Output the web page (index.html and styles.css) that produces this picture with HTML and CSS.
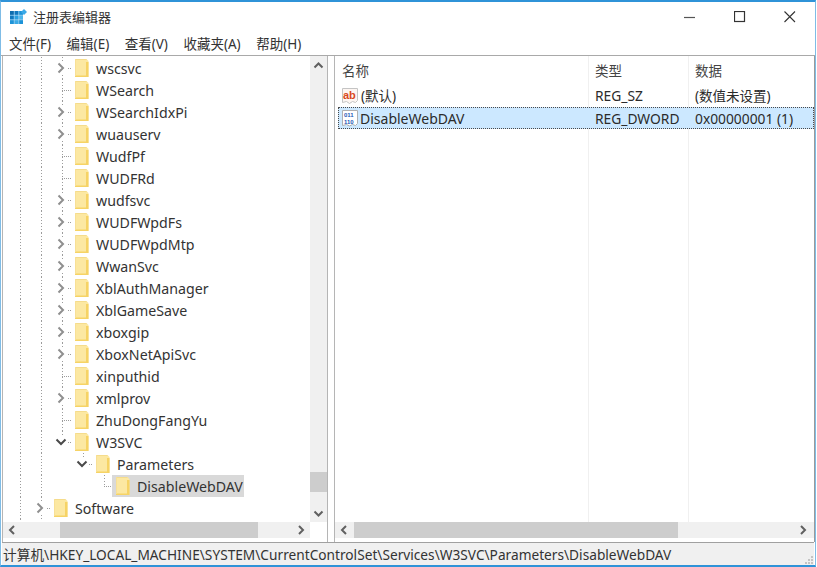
FILE: index.html
```html
<!DOCTYPE html>
<html lang="zh-CN">
<head>
<meta charset="utf-8">
<title>注册表编辑器</title>
<link rel="stylesheet" href="styles.css">
</head>
<body>
<svg class="defs" width="0" height="0" aria-hidden="true">
  <defs>
    <symbol id="folder" viewBox="0 0 16 22">
      <path d="M1 2h11.500l2 2v16H1z" fill="#fce8a2"/>
      <path d="M12 5h2.500v15H1v-1.500h11z" fill="#f6d365"/>
      <path d="M1 2.500h11.500" stroke="#f5dc8c" stroke-width="1" fill="none"/>
      <path d="M1.500 2v17" stroke="#f8e096" stroke-width="1" fill="none"/>
    </symbol>
    <symbol id="chev-r" viewBox="0 0 21 22">
      <path d="M7.500 6.500l4.500 4.500-4.500 4.500" fill="none" stroke="#8f8f8f" stroke-width="2"/>
    </symbol>
    <symbol id="chev-d" viewBox="0 0 21 22">
      <path d="M5.500 8.500l4.500 4.500 4.500-4.500" fill="none" stroke="#4a4a4a" stroke-width="2"/>
    </symbol>
  </defs>
</svg>
<div class="window">
  <header class="titlebar">
    <svg class="appicon" width="17" height="17" viewBox="0 0 17 17">
      <rect x="0" y="2" width="13" height="13" fill="#1d93d8"/>
      <rect x="0" y="2" width="4" height="4" fill="#0e6cae"/>
      <rect x="4.500" y="2" width="4" height="4" fill="#1178bf"/>
      <rect x="0" y="6.500" width="4" height="4" fill="#1178bf"/>
      <rect x="4.500" y="6.500" width="4" height="4" fill="#2aa0e0"/>
      <rect x="9" y="6.500" width="4" height="4" fill="#4cb6ec"/>
      <rect x="4.500" y="11" width="4" height="4" fill="#3aaae6"/>
      <path d="M0 6.250h13M0 10.750h13M4.250 2v13M8.750 2v13" stroke="#cfeafa" stroke-width=".6"/>
      <path d="M14 0l3 3-3 3-3-3z" fill="#3aa9e8"/>
    </svg>
    <span class="title">注册表编辑器</span>
    <div class="controls">
      <span class="ctl"><svg width="12" height="12" viewBox="0 0 12 12"><path d="M0 6.500h11" stroke="#555" stroke-width="1.200"/></svg></span>
      <span class="ctl"><svg width="12" height="12" viewBox="0 0 12 12"><rect x=".5" y=".5" width="10" height="10" fill="none" stroke="#333" stroke-width="1.200"/></svg></span>
      <span class="ctl"><svg width="12" height="12" viewBox="0 0 12 12"><path d="M.5.500l10.500 10.500M11 .5L.5 11" stroke="#333" stroke-width="1.100"/></svg></span>
    </div>
  </header>
  <nav class="menubar">
    <span class="menu">文件(F)</span>
    <span class="menu">编辑(E)</span>
    <span class="menu">查看(V)</span>
    <span class="menu">收藏夹(A)</span>
    <span class="menu">帮助(H)</span>
  </nav>
  <main class="panes">
    <section class="pane tree-pane">
      <div class="pane-top">
        <div class="tree">
          <div class="row"><i class="c g"></i><i class="c g"></i><i class="c tee"><svg class="chev"><use href="#chev-r"/></svg></i><svg class="folder"><use href="#folder"/></svg><span class="label">wscsvc</span></div>
          <div class="row"><i class="c g"></i><i class="c g"></i><i class="c tee"></i><svg class="folder"><use href="#folder"/></svg><span class="label">WSearch</span></div>
          <div class="row"><i class="c g"></i><i class="c g"></i><i class="c tee"><svg class="chev"><use href="#chev-r"/></svg></i><svg class="folder"><use href="#folder"/></svg><span class="label">WSearchIdxPi</span></div>
          <div class="row"><i class="c g"></i><i class="c g"></i><i class="c tee"><svg class="chev"><use href="#chev-r"/></svg></i><svg class="folder"><use href="#folder"/></svg><span class="label">wuauserv</span></div>
          <div class="row"><i class="c g"></i><i class="c g"></i><i class="c tee"></i><svg class="folder"><use href="#folder"/></svg><span class="label">WudfPf</span></div>
          <div class="row"><i class="c g"></i><i class="c g"></i><i class="c tee"></i><svg class="folder"><use href="#folder"/></svg><span class="label">WUDFRd</span></div>
          <div class="row"><i class="c g"></i><i class="c g"></i><i class="c tee"><svg class="chev"><use href="#chev-r"/></svg></i><svg class="folder"><use href="#folder"/></svg><span class="label">wudfsvc</span></div>
          <div class="row"><i class="c g"></i><i class="c g"></i><i class="c tee"><svg class="chev"><use href="#chev-r"/></svg></i><svg class="folder"><use href="#folder"/></svg><span class="label">WUDFWpdFs</span></div>
          <div class="row"><i class="c g"></i><i class="c g"></i><i class="c tee"><svg class="chev"><use href="#chev-r"/></svg></i><svg class="folder"><use href="#folder"/></svg><span class="label">WUDFWpdMtp</span></div>
          <div class="row"><i class="c g"></i><i class="c g"></i><i class="c tee"><svg class="chev"><use href="#chev-r"/></svg></i><svg class="folder"><use href="#folder"/></svg><span class="label">WwanSvc</span></div>
          <div class="row"><i class="c g"></i><i class="c g"></i><i class="c tee"><svg class="chev"><use href="#chev-r"/></svg></i><svg class="folder"><use href="#folder"/></svg><span class="label">XblAuthManager</span></div>
          <div class="row"><i class="c g"></i><i class="c g"></i><i class="c tee"><svg class="chev"><use href="#chev-r"/></svg></i><svg class="folder"><use href="#folder"/></svg><span class="label">XblGameSave</span></div>
          <div class="row"><i class="c g"></i><i class="c g"></i><i class="c tee"><svg class="chev"><use href="#chev-r"/></svg></i><svg class="folder"><use href="#folder"/></svg><span class="label">xboxgip</span></div>
          <div class="row"><i class="c g"></i><i class="c g"></i><i class="c tee"><svg class="chev"><use href="#chev-r"/></svg></i><svg class="folder"><use href="#folder"/></svg><span class="label">XboxNetApiSvc</span></div>
          <div class="row"><i class="c g"></i><i class="c g"></i><i class="c tee"></i><svg class="folder"><use href="#folder"/></svg><span class="label">xinputhid</span></div>
          <div class="row"><i class="c g"></i><i class="c g"></i><i class="c tee"><svg class="chev"><use href="#chev-r"/></svg></i><svg class="folder"><use href="#folder"/></svg><span class="label">xmlprov</span></div>
          <div class="row"><i class="c g"></i><i class="c g"></i><i class="c tee"></i><svg class="folder"><use href="#folder"/></svg><span class="label">ZhuDongFangYu</span></div>
          <div class="row"><i class="c g"></i><i class="c g"></i><i class="c end"><svg class="chev"><use href="#chev-d"/></svg></i><svg class="folder"><use href="#folder"/></svg><span class="label">W3SVC</span></div>
          <div class="row"><i class="c g"></i><i class="c g"></i><i class="c"></i><i class="c end"><svg class="chev"><use href="#chev-d"/></svg></i><svg class="folder"><use href="#folder"/></svg><span class="label">Parameters</span></div>
          <div class="row"><i class="c g"></i><i class="c g"></i><i class="c"></i><i class="c"></i><i class="c end"></i><span class="selected"><svg class="folder"><use href="#folder"/></svg><span class="label">DisableWebDAV</span></span></div>
          <div class="row"><i class="c g"></i><i class="c tee"><svg class="chev"><use href="#chev-r"/></svg></i><svg class="folder"><use href="#folder"/></svg><span class="label">Software</span></div>
          <div class="tail"><i class="c g"></i></div>
        </div>
        <div class="vscroll">
          <svg class="sb-arrow" width="17" height="17" viewBox="0 0 17 17"><path d="M4.500 11.500l4-4 4 4" fill="none" stroke="#606060" stroke-width="2"/></svg>
          <div class="vtrack"><div class="vthumb"></div></div>
          <svg class="sb-arrow" width="17" height="17" viewBox="0 0 17 17"><path d="M4.500 6.500l4 4 4-4" fill="none" stroke="#606060" stroke-width="2"/></svg>
        </div>
      </div>
      <div class="hscroll">
        <svg class="sb-arrow" width="17" height="16" viewBox="0 0 17 16"><path d="M11 4l-4 4 4 4" fill="none" stroke="#606060" stroke-width="2"/></svg>
        <div class="htrack"><div class="hthumb hthumb-tree"></div></div>
        <svg class="sb-arrow" width="17" height="16" viewBox="0 0 17 16"><path d="M6 4l4 4-4 4" fill="none" stroke="#606060" stroke-width="2"/></svg>
        <div class="corner"></div>
      </div>
    </section>
    <section class="pane list-pane">
      <div class="list">
        <div class="lhead">
          <span class="col col-name cjk">名称</span>
          <span class="col col-type cjk">类型</span>
          <span class="col col-data cjk">数据</span>
        </div>
        <div class="lrow">
          <span class="col col-name">
            <svg class="valicon" width="18" height="18" viewBox="0 0 18 18">
              <path d="M1.500 1.500h15v12l-2 2-3-1-3 2-3-2-4 1z" fill="#fdf6f2" stroke="#c4c4c4"/>
              <text x="2" y="11.500" class="abtext">ab</text>
            </svg><span class="cjk">(默认)</span></span>
          <span class="col col-type">REG_SZ</span>
          <span class="col col-data cjk">(数值未设置)</span>
        </div>
        <div class="lrow lrow-sel">
          <span class="col col-name">
            <svg class="valicon" width="18" height="18" viewBox="0 0 18 18">
              <path d="M1.500 1.500h15v13l-2 2-3-1-3 1.500-3-1.500-4 1z" fill="#fff" stroke="#b0b0b0"/>
              <text x="3" y="7.500" class="bintext">011</text>
              <text x="3" y="14.500" class="bintext">110</text>
            </svg><span class="name-text">DisableWebDAV</span></span>
          <span class="col col-type">REG_DWORD</span>
          <span class="col col-data">0x00000001 (1)</span>
        </div>
      </div>
      <div class="hscroll hscroll-list">
        <svg class="sb-arrow" width="17" height="16" viewBox="0 0 17 16"><path d="M11 4l-4 4 4 4" fill="none" stroke="#606060" stroke-width="2"/></svg>
        <div class="htrack"><div class="hthumb hthumb-list"></div></div>
        <svg class="sb-arrow" width="17" height="16" viewBox="0 0 17 16"><path d="M6 4l4 4-4 4" fill="none" stroke="#606060" stroke-width="2"/></svg>
      </div>
    </section>
  </main>
  <footer class="status">
    <span class="path">计算机\HKEY_LOCAL_MACHINE\SYSTEM\CurrentControlSet\Services\W3SVC\Parameters\DisableWebDAV</span>
    <svg class="grip" width="10" height="10" viewBox="0 0 10 10"><path d="M7 1h2v2H7zM4 4h2v2H4zM7 4h2v2H7zM1 7h2v2H1zM4 7h2v2H4zM7 7h2v2H7z" fill="#c4c4c4"/></svg>
  </footer>
</div>
</body>
</html>
```

FILE: styles.css
```css
* { box-sizing: border-box; }
html, body { margin: 0; padding: 0; }
body {
  width: 817px;
  height: 567px;
  overflow: hidden;
  background: #fff;
  font-family: "Noto Sans", "Noto Sans CJK SC", sans-serif;
  font-size: 13.800px;
  color: #2b2b2b;
}
.defs { display: block; height: 0; }
.window {
  width: 816px;
  height: 567px;
  display: flex;
  flex-direction: column;
  border-top: 2px solid #2f93d8;
  border-left: 1px solid #7fbce6;
  border-right: 1px solid #7fbce6;
  border-bottom: 2px solid #2f93d8;
  background: #fff;
}
.titlebar {
  height: 31px;
  display: flex;
  align-items: center;
  padding-left: 9px;
  flex: none;
}
.appicon { display: block; margin-right: 6px; }
.title { font-size: 13px; color: #333; margin-top: -2px; }
.controls { margin-left: auto; display: flex; }
.ctl {
  width: 50px;
  height: 30px;
  display: flex;
  align-items: center;
  justify-content: center;
  margin-top: -2px;
}
.menubar {
  height: 23px;
  flex: none;
  display: flex;
  align-items: center;
  gap: 15.500px;
  padding-left: 8px;
  border-bottom: 1px solid #a9a9a9;
}
.menu { font-size: 13.500px; color: #333; margin-top: -2px; }
.panes {
  flex: 1;
  min-height: 0;
  display: flex;
  gap: 6px;
  padding-left: 1px;
}
.pane {
  display: flex;
  flex-direction: column;
  min-height: 0;
  border-left: 1px solid #b5b5b5;
  border-right: 1px solid #b5b5b5;
}
.tree-pane { width: 326px; flex: none; }
.list-pane { flex: 1; min-width: 0; border-right-color: #9a9a9a; }
.pane-top { flex: 1; min-height: 0; display: flex; }
.tree { flex: 1; min-width: 0; padding: 1px 0 0 6px; overflow: hidden; }
.row { height: 22px; display: flex; align-items: center; }
.tail { height: 3px; display: flex; }
.c {
  position: relative;
  display: block;
  width: 21px;
  height: 100%;
  flex: none;
}
.g, .tee, .end {
  background-image: repeating-linear-gradient(#9c9c9c 0 1px, transparent 1px 3px);
  background-size: 1px 100%;
  background-position: 11px 0;
  background-repeat: no-repeat;
}
.end {
  background-size: 1px 50%;
}
.tee::after, .end::after {
  content: "";
  position: absolute;
  left: 11px;
  top: 11px;
  width: 10px;
  height: 1px;
  background-image: repeating-linear-gradient(90deg, #9c9c9c 0 1px, transparent 1px 2px);
}
.chev {
  position: absolute;
  left: 0;
  top: 0;
  width: 21px;
  height: 22px;
  z-index: 1;
  background: linear-gradient(#fff, #fff) 5px 5px / 11px 12px no-repeat;
}
.folder { display: block; flex: none; width: 16px; height: 22px; margin-left: 2px; }
.label { margin-left: 6px; white-space: nowrap; font-size: 14.200px; color: #333; }
.selected {
  display: flex;
  align-items: center;
  height: 22px;
  background: #d9d9d9;
  margin-left: -2px;
  padding-left: 1px;
  padding-right: 1px;
  position: relative;
}
.vscroll {
  width: 17px;
  flex: none;
  background: #f0f0f0;
  display: flex;
  flex-direction: column;
}
.sb-arrow { display: block; flex: none; }
.vtrack { flex: 1; padding-top: 399px; }
.vthumb { height: 20px; background: #cdcdcd; }
.hscroll {
  height: 16px;
  flex: none;
  background: #f0f0f0;
  display: flex;
  margin-bottom: 4px;
}
.hscroll-list { padding-right: 2px; }
.htrack { flex: 1; min-width: 0; display: flex; }
.hthumb { height: 16px; background: #cdcdcd; }
.hthumb-tree { width: 198px; margin-left: 40px; }
.hthumb-list { width: 324px; margin-left: 2px; }
.corner { width: 17px; flex: none; background: #fff; }
.list { flex: 1; min-height: 0; padding-top: 1px; overflow: hidden;
  background-image:
    linear-gradient(#f0f0f0, #f0f0f0),
    linear-gradient(#f0f0f0, #f0f0f0);
  background-size: 1px 100%, 1px 100%;
  background-position: 253px 0, 353px 0;
  background-repeat: no-repeat;
}
.lhead { height: 27px; display: flex; align-items: center; color: #444; }
.lhead .col { margin-top: -2px; }
.lrow { height: 23px; display: flex; align-items: center; }
.lrow-sel {
  height: 22px;
  background: #cce8ff;
  outline: 1px dotted #4a4a4a;
  outline-offset: -1px;
  margin-left: 3px;
}
.col { display: flex; align-items: center; white-space: nowrap; }
.col-name { width: 253px; padding-left: 7px; }
.col-type { width: 100px; padding-left: 7px; }
.col-data { padding-left: 7px; flex: 1; }
.cjk { font-size: 13.500px; }
.lrow .cjk { margin-top: -1px; }
.name-text { font-size: 14px; margin-left: -1px; }
.lrow-sel .col-name { width: 250px; padding-left: 4px; }
.valicon { display: block; flex: none; margin-left: -1px; margin-right: 2px; }
.abtext { font-family: "Liberation Sans", sans-serif; font-weight: 700; font-size: 11px; fill: #d9481c; }
.bintext { font-family: "Liberation Sans", sans-serif; font-weight: 700; font-size: 6px; fill: #2358b8; }
.status {
  height: 23px;
  flex: none;
  display: flex;
  align-items: center;
  background: #f0f0f0;
  border-top: 1px solid #a0a0a0;
  padding-left: 1px;
  margin-left: 1px;
  margin-right: 1px;
  position: relative;
}
.path { white-space: nowrap; font-size: 13.700px; color: #333; margin-top: -1px; }
.grip { position: absolute; right: 0; bottom: 0; }
```
